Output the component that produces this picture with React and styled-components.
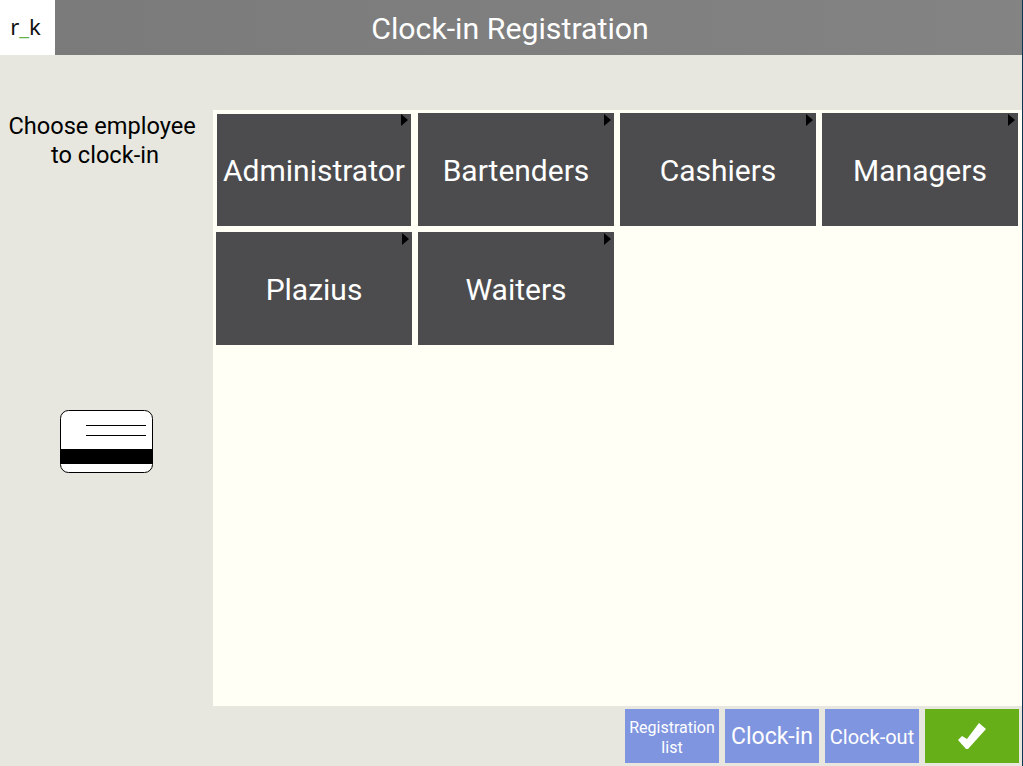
import styled, { createGlobalStyle } from "styled-components";

const GlobalStyle = createGlobalStyle`
  html, body {
    margin: 0;
    padding: 0;
    background: #e7e7df;
  }
`;

const groups = ["Administrator", "Bartenders", "Cashiers", "Managers", "Plazius", "Waiters"];

const CardIcon = () => (
  <svg width="94" height="64" viewBox="0 0 94 64">
    <rect x="0.5" y="0.5" width="92" height="62" rx="8" fill="#fff" stroke="#000" />
    <rect x="0" y="39" width="93" height="15" fill="#000" />
    <path d="M26 15.5H86M26 25.5H86" stroke="#000" fill="none" />
  </svg>
);

const CheckIcon = () => (
  <svg width="28" height="26" viewBox="0 0 28 26">
    <polygon points="0,17 4,13 9,16 21,0 28,6 10,26 8,26" fill="#fff" />
  </svg>
);

export default function App() {
  return (
    <>
      <GlobalStyle />
      <Screen>
        <Header>
          <Logo>
            r<LogoDash>_</LogoDash>k
          </Logo>
          <Title>Clock-in Registration</Title>
        </Header>
        <Main>
          <Side>
            <Prompt>
              Choose employee&nbsp;
              <br />
              to clock-in
            </Prompt>
            <CardSlot>
              <CardIcon />
            </CardSlot>
          </Side>
          <Panel>
            {groups.map((name, i) => (
              <Tile key={name} $inset={i === 0}>
                {name}
              </Tile>
            ))}
          </Panel>
        </Main>
        <Footer>
          <ActionButton $size={16}>
            Registration
            <br />
            list
          </ActionButton>
          <ActionButton $size={23}>Clock-in</ActionButton>
          <ActionButton $size={20}>Clock-out</ActionButton>
          <ConfirmButton>
            <CheckIcon />
          </ConfirmButton>
        </Footer>
      </Screen>
    </>
  );
}

const Screen = styled.div`
  width: 1022px;
  height: 766px;
  border-right: 1px solid #0b3550;
  display: flex;
  flex-direction: column;
  background: #e7e7df;
  font-family: Roboto, "Noto Sans", sans-serif;
  overflow: hidden;
`;

const Header = styled.header`
  height: 55px;
  display: grid;
  grid-template-columns: 55px 1fr 57px;
  align-items: center;
  background: linear-gradient(90deg, #7a7a7a, #838383);
`;

const Logo = styled.div`
  height: 55px;
  padding-right: 4px;
  box-sizing: border-box;
  background: #fff;
  color: #111;
  font-family: "Noto Sans", sans-serif;
  font-size: 22px;
  line-height: 52px;
  text-align: center;
`;

const LogoDash = styled.span`
  color: #6ab04a;
`;

const Title = styled.h1`
  margin: 0;
  padding-top: 1px;
  color: #fff;
  font-size: 30.3px;
  font-weight: 400;
  text-align: center;
`;

const Main = styled.main`
  height: 651px;
  display: flex;
  padding-top: 55px;
  box-sizing: border-box;
`;

const Side = styled.aside`
  width: 213px;
  flex: none;
  display: flex;
  flex-direction: column;
`;

const Prompt = styled.div`
  width: 210px;
  margin-top: 2px;
  color: #000;
  font-size: 23.6px;
  line-height: 29px;
  text-align: center;
`;

const CardSlot = styled.div`
  margin: 240px 0 0 60px;
  line-height: 0;
`;

const Panel = styled.section`
  flex: 1;
  display: grid;
  grid-template-columns: repeat(4, 196px);
  grid-auto-rows: 113px;
  gap: 6px;
  align-content: start;
  padding: 3px;
  background: #fffff6;
`;

const Tile = styled.div`
  position: relative;
  display: flex;
  align-items: center;
  justify-content: center;
  margin: ${({ $inset }) => ($inset ? "1px 1px 0" : "0")};
  padding-top: ${({ $inset }) => ($inset ? "0" : "2px")};
  background: #4c4c4e;
  color: #fff;
  font-size: 30px;

  &::after {
    content: "";
    position: absolute;
    top: ${({ $inset }) => ($inset ? "0" : "1px")};
    right: 3px;
    border-style: solid;
    border-width: 6.5px 0 6.5px 7px;
    border-color: transparent transparent transparent #000;
  }
`;

const Footer = styled.footer`
  height: 60px;
  display: flex;
  justify-content: flex-end;
  gap: 6px;
  padding: 3px 3px 3px 0;
  box-sizing: border-box;
`;

const ActionButton = styled.button`
  width: 94px;
  height: 54px;
  padding: 3px 0 0;
  border: 0;
  background: #7f95df;
  color: #fff;
  font-family: inherit;
  font-size: ${({ $size }) => $size}px;
  line-height: 1.25;
`;

const ConfirmButton = styled(ActionButton)`
  display: flex;
  align-items: center;
  justify-content: center;
  padding: 0;
  background: #67af19;
`;
